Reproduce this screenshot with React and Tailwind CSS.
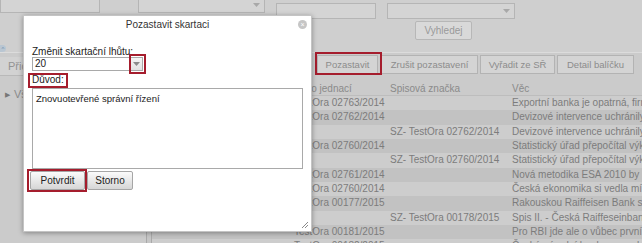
import React from 'react';

const rows = [
  { cj: 'TestOra 02763/2014', sz: '', vec: 'Exportní banka je opatrná, firmy se bojí' },
  { cj: 'TestOra 02762/2014', sz: '', vec: 'Devizové intervence uchránily ekonomiku' },
  { cj: '', sz: 'SZ- TestOra 02762/2014', vec: 'Devizové intervence uchránily ekonomiku' },
  { cj: 'TestOra 02760/2014', sz: '', vec: 'Statistický úřad přepočítal výkon' },
  { cj: '', sz: 'SZ- TestOra 02760/2014', vec: 'Statistický úřad přepočítal výkon' },
  { cj: 'TestOra 02761/2014', sz: '', vec: 'Nová metodika ESA 2010 by mohla' },
  { cj: 'TestOra 02760/2014', sz: '', vec: 'Česká ekonomika si vedla mírně' },
  { cj: 'TestOra 00177/2015', sz: '', vec: 'Rakouskou Raiffeisen Bank stále' },
  { cj: '', sz: 'SZ- TestOra 00178/2015', vec: 'Spis II. - Česká Raiffeseinbank' },
  { cj: 'TestOra 00181/2015', sz: '', vec: 'Pro RBI jde ale o vůbec první ztrátu' },
  { cj: 'TestOra 00182/2015', sz: '', vec: 'Česká národní banka ponechala' },
];

function Caret({ className }) {
  return (
    <svg width="7" height="4" viewBox="0 0 7 4" className={className}>
      <path d="M0 0 L7 0 L3.5 4 Z" fill="currentColor" />
    </svg>
  );
}

export default function App() {
  return (
    <div className="relative w-[642px] h-[243px] overflow-hidden bg-[#cbcbcb] font-['Liberation_Sans',Arial,sans-serif] text-[10px] leading-none">
      {/* page behind the dialog, shown dimmed */}
      <div className="flex flex-col h-full">
        <div className="h-[53px] shrink-0 bg-[#cfcfcf] border-b border-[#dcdcdc] flex flex-col">
          <div className="flex items-start h-[20px] -mt-[3px]">
            <div className="w-[100px] h-[16px] bg-[#d4d4d4] border border-[#b5b5b5]" />
            <div className="ml-[38px] w-[127px] h-[16px] bg-[#d4d4d4] border border-[#b5b5b5] flex items-center justify-end pr-[4px]">
              <Caret className="text-[#a8a8a8]" />
            </div>
            <div className="ml-[11px] mt-[6px] w-[100px] h-[16px] bg-[#d4d4d4] border border-[#b5b5b5]" />
            <div className="ml-[11px] mt-[6px] w-[128px] h-[16px] bg-[#d4d4d4] border border-[#b5b5b5] flex items-center justify-end pr-[4px]">
              <Caret className="text-[#a8a8a8]" />
            </div>
          </div>
          <div className="mt-[4px] ml-[415px] w-[57px] h-[19px] bg-[#d9d9d9] border border-[#b7b7b7] rounded-[2px] flex items-center justify-center text-[#9a9a9a]">
            Vyhledej
          </div>
          <div className="mt-[5px] w-[6px] h-[7px] rounded-r-full bg-[#b9c6d2] flex items-center justify-center">
            <span className="text-[6px] text-[#6f8fae] leading-none">^</span>
          </div>
        </div>

        <div className="flex flex-1 min-h-0">
          <div className="w-[147px] shrink-0 border-r border-[#a9a9a9] flex flex-col">
            <div className="mt-[4px] h-[19px] bg-[#d2d2d2] border-b border-[#b9b9b9] flex items-center pl-[8px] text-[#939393] text-[11px]">
              Přidat
            </div>
            <div className="mt-[12px] h-[12px] flex items-center pl-[5px] gap-[4px] text-[#8a8a8a] text-[11px]">
              <span className="text-[7px] text-[#777]">▶</span>
              <span>Všechny</span>
            </div>
          </div>
          <div className="w-[5px] shrink-0 bg-[#c6c6c6] border-r border-[#a9a9a9]" />

          <div className="flex-1 flex flex-col min-w-0">
            <div className="h-[24px] shrink-0 flex items-start pt-[2px] pl-[165px] text-[#8c8c8c] text-[9.5px]">
              <div className="w-[61px] h-[19px] bg-[#d4d4d4] border border-[#b3b3b3] flex items-center justify-center">Pozastavit</div>
              <div className="ml-[3px] w-[97px] h-[19px] bg-[#d4d4d4] border border-[#b3b3b3] flex items-center justify-center">Zrušit pozastavení</div>
              <div className="ml-[2px] w-[75px] h-[19px] bg-[#d4d4d4] border border-[#b3b3b3] flex items-center justify-center">Vyřadit ze SŘ</div>
              <div className="ml-[2px] w-[77px] h-[19px] bg-[#d4d4d4] border border-[#b3b3b3] flex items-center justify-center">Detail balíčku</div>
            </div>
            <div className="mt-[6px] h-[13px] shrink-0 flex items-center text-[#8a8a8a] border-b border-[#bdbdbd]">
              <div className="w-[142px] shrink-0" />
              <div className="w-[96px] shrink-0 whitespace-nowrap">Číslo jednací</div>
              <div className="w-[122px] shrink-0 whitespace-nowrap">Spisová značka</div>
              <div className="flex-1 whitespace-nowrap">Věc</div>
            </div>
            {rows.map((r, i) => (
              <div
                key={i}
                className={`h-[14.33px] shrink-0 flex items-center text-[#7c7c7c] whitespace-nowrap overflow-hidden ${i % 2 === 0 ? 'bg-[#cdcdcd]' : 'bg-[#c2c2c2]'}`}
              >
                <div className="w-[142px] shrink-0" />
                <div className="w-[96px] shrink-0">{r.cj}</div>
                <div className="w-[122px] shrink-0">{r.sz}</div>
                <div className="flex-1">{r.vec}</div>
              </div>
            ))}
          </div>
        </div>
      </div>

      {/* annotation on the toolbar button */}
      <div className="absolute left-[315px] top-[52px] w-[67px] h-[23px] border-2 border-[#a51d2d]" />

      {/* dialog */}
      <div className="absolute left-[23px] top-[15px] w-[289px] h-[217px] bg-white border border-[#c4c4c4] shadow-[0_1px_5px_rgba(0,0,0,0.35)] flex flex-col text-[#222]">
        <div className="h-[18px] shrink-0 flex items-center justify-center text-[#333] relative">
          Pozastavit skartaci
          <div className="absolute right-[4px] top-[4px] w-[9px] h-[9px] rounded-full bg-[#c6c6c6] flex items-center justify-center text-white text-[7px] leading-none">
            ×
          </div>
        </div>

        <div className="pl-[8px] flex flex-col">
          <div className="mt-[12px] h-[11px] leading-[11px]">Změnit skartační lhůtu:</div>
          <div className="w-[111px] h-[14px] border border-[#a9a9a9] flex items-center">
            <span className="flex-1 pl-[2px] leading-none">20</span>
            <div className="w-[12px] h-full bg-gradient-to-b from-[#f4f4f4] to-[#e2e2e2] border-l border-[#d0d0d0] flex items-center justify-center">
              <Caret className="text-[#8a8a8a]" />
            </div>
          </div>
          <div className="mt-[3px] h-[12px] leading-[12px]">Důvod:</div>
          <div className="mt-[2px] w-[271px] h-[81px] border border-[#a9a9a9] pt-[4px] pl-[3px] text-[9.5px] leading-[11px]">
            Znovuotevřené správní řízení
          </div>
          <div className="mt-[2px] -ml-[2px] flex gap-[2px]">
            <div className="w-[55px] h-[19px] rounded-[2px] border border-[#a6a6a6] bg-gradient-to-b from-[#fbfbfb] to-[#d6d6d6] flex items-center justify-center">
              Potvrdit
            </div>
            <div className="w-[46px] h-[19px] rounded-[2px] border border-[#a6a6a6] bg-gradient-to-b from-[#fbfbfb] to-[#d6d6d6] flex items-center justify-center">
              Storno
            </div>
          </div>
        </div>

        <svg width="7" height="7" viewBox="0 0 7 7" className="absolute right-[3px] bottom-[3px]">
          <path d="M1 7 L7 1 M4 7 L7 4" stroke="#8a8a8a" strokeWidth="1" />
        </svg>

        {/* annotations */}
        <div className="absolute left-[105px] top-[38px] w-[17px] h-[20px] border-2 border-[#a51d2d]" />
        <div className="absolute left-[4px] top-[57px] w-[40px] h-[15px] border-2 border-[#a51d2d]" />
        <div className="absolute left-[3px] top-[153px] w-[60px] h-[23px] border-2 border-[#a51d2d]" />
      </div>
    </div>
  );
}
